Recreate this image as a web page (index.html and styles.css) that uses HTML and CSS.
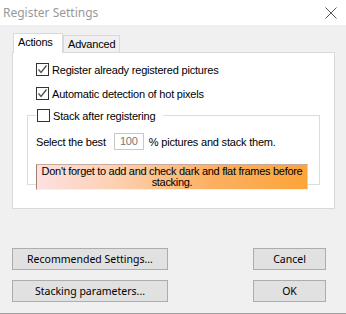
FILE: index.html
```html
<!DOCTYPE html>
<html lang="en">
<head>
  <meta charset="UTF-8">
  <title>Register Settings</title>
  <link rel="stylesheet" href="styles.css">
</head>
<body>
  <div class="window">
    <div class="titlebar">
      <span class="title">Register Settings</span>
      <svg class="close" width="12" height="12" viewBox="0 0 12 12">
        <path d="M0.5 0.5 L11.5 11.5 M11.5 0.5 L0.5 11.5" stroke="#555" stroke-width="1" fill="none"/>
      </svg>
    </div>

    <div class="client">
      <div class="tabs">
        <div class="tab active">Actions</div>
        <div class="tab">Advanced</div>
      </div>

      <div class="panel">
        <label class="check-row">
          <span class="box checked">
            <svg width="11" height="11" viewBox="0 0 11 11"><polyline points="1.5,5.5 4,8.5 9.5,1.5" fill="none" stroke="#555" stroke-width="1.4"/></svg>
          </span>
          Register already registered pictures
        </label>
        <label class="check-row">
          <span class="box checked">
            <svg width="11" height="11" viewBox="0 0 11 11"><polyline points="1.5,5.5 4,8.5 9.5,1.5" fill="none" stroke="#555" stroke-width="1.4"/></svg>
          </span>
          Automatic detection of hot pixels
        </label>

        <fieldset class="group">
          <legend class="check-row legend">
            <span class="box"></span>
            Stack after registering
          </legend>
          <div class="best-row">
            <span>Select the best</span>
            <span class="num">100</span>
            <span>% pictures and stack them.</span>
          </div>
          <div class="warning">
            Don't forget to add and check dark and flat frames before stacking.
          </div>
        </fieldset>
      </div>

      <div class="buttons">
        <div class="btn-col">
          <button class="btn wide">Recommended Settings...</button>
          <button class="btn wide">Stacking parameters...</button>
        </div>
        <div class="btn-col">
          <button class="btn">Cancel</button>
          <button class="btn">OK</button>
        </div>
      </div>
    </div>
  </div>
</body>
</html>
```

FILE: styles.css
```css
html, body {
  margin: 0; padding: 0;
  background: #f0f0f0;
  height: 100%; overflow: hidden;
}
.window {
  width: 346px; height: 313px;
  border-bottom: 1px solid #a0a0a0;
  background: #f0f0f0;
}
.titlebar {
  height: 25px;
  background: #fff;
  display: flex;
  align-items: center;
  justify-content: space-between;
  padding: 0 9px 0 3px;
}
.title {
  font-family: 'Noto Sans', 'Liberation Sans', sans-serif;
  font-size: 12px;
  color: #999;
}
.client {
  padding: 8px 11px 0 12px;
  font-family: 'Liberation Sans', Arial, sans-serif;
  font-size: 11px;
  letter-spacing: -0.2px;
  color: #000;
}
.tabs {
  display: flex;
  align-items: flex-end;
  height: 19px;
  padding-left: 1px;
}
.tab {
  height: 16px;
  line-height: 16px;
  padding: 0 4px;
  border: 1px solid #d9d9d9;
  border-bottom: none;
  background: #f0f0f0;
}
.tab.active {
  height: 19px;
  line-height: 17px;
  width: 40px;
  padding: 0 4px;
  background: #fff;
  margin-bottom: -1px;
  position: relative;
  z-index: 1;
}
.panel {
  width: 321px;
  height: 155px;
  border: 1px solid #d9d9d9;
  background: #fff;
  padding: 0;
  box-sizing: content-box;
  display: flex;
  flex-direction: column;
}
.check-row {
  display: flex;
  align-items: center;
  gap: 3px;
  height: 13px;
  margin-left: 23px;
}
.panel > .check-row:first-child { margin-top: 10px; }
.panel > .check-row + .check-row { margin-top: 11px; }
.box {
  width: 11px; height: 11px;
  border: 1px solid #333;
  background: #fff;
  display: inline-flex;
}
.group {
  margin: 9px 14px 0 14px;
  padding: 0 0 0 8px;
  border: 1px solid #dcdcdc;
  height: 74px;
}
.legend {
  margin-left: 0;
  padding: 0 8px 0 1px;
}
.best-row {
  display: flex;
  align-items: center;
  height: 17px;
  margin-top: 11px;
}
.num {
  width: 28px; height: 15px;
  border: 1px solid #c8c8c8;
  color: #777;
  text-align: center;
  line-height: 15px;
  margin: 0 5px 0 8px;
}
.warning {
  margin-top: 14px;
  width: 270px;
  height: 23px;
  border-top: 1px solid #c9a9a0;
  border-left: 1px solid #a08070;
  border-right: 1px solid #f6d0a0;
  border-bottom: 1px solid #fff0d0;
  background: linear-gradient(to right, #fde0e0 0%, #fdd0b0 30%, #fbb060 65%, #fba53a 100%);
  text-align: center;
  letter-spacing: -0.3px;
  line-height: 11px;
  padding-top: 1px;
  box-sizing: content-box;
}
.buttons {
  display: flex;
  justify-content: space-between;
  margin-top: 39px;
  padding-right: 9px;
}
.btn-col {
  display: flex;
  flex-direction: column;
  gap: 10px;
}
.btn {
  width: 73px;
  height: 22px;
  border: 1px solid #adadad;
  background: #e1e1e1;
  font-family: 'Noto Sans', 'Liberation Sans', sans-serif;
  font-size: 10.5px;
  color: #000;
  padding: 0;
}
.btn.wide { width: 156px; }
```
